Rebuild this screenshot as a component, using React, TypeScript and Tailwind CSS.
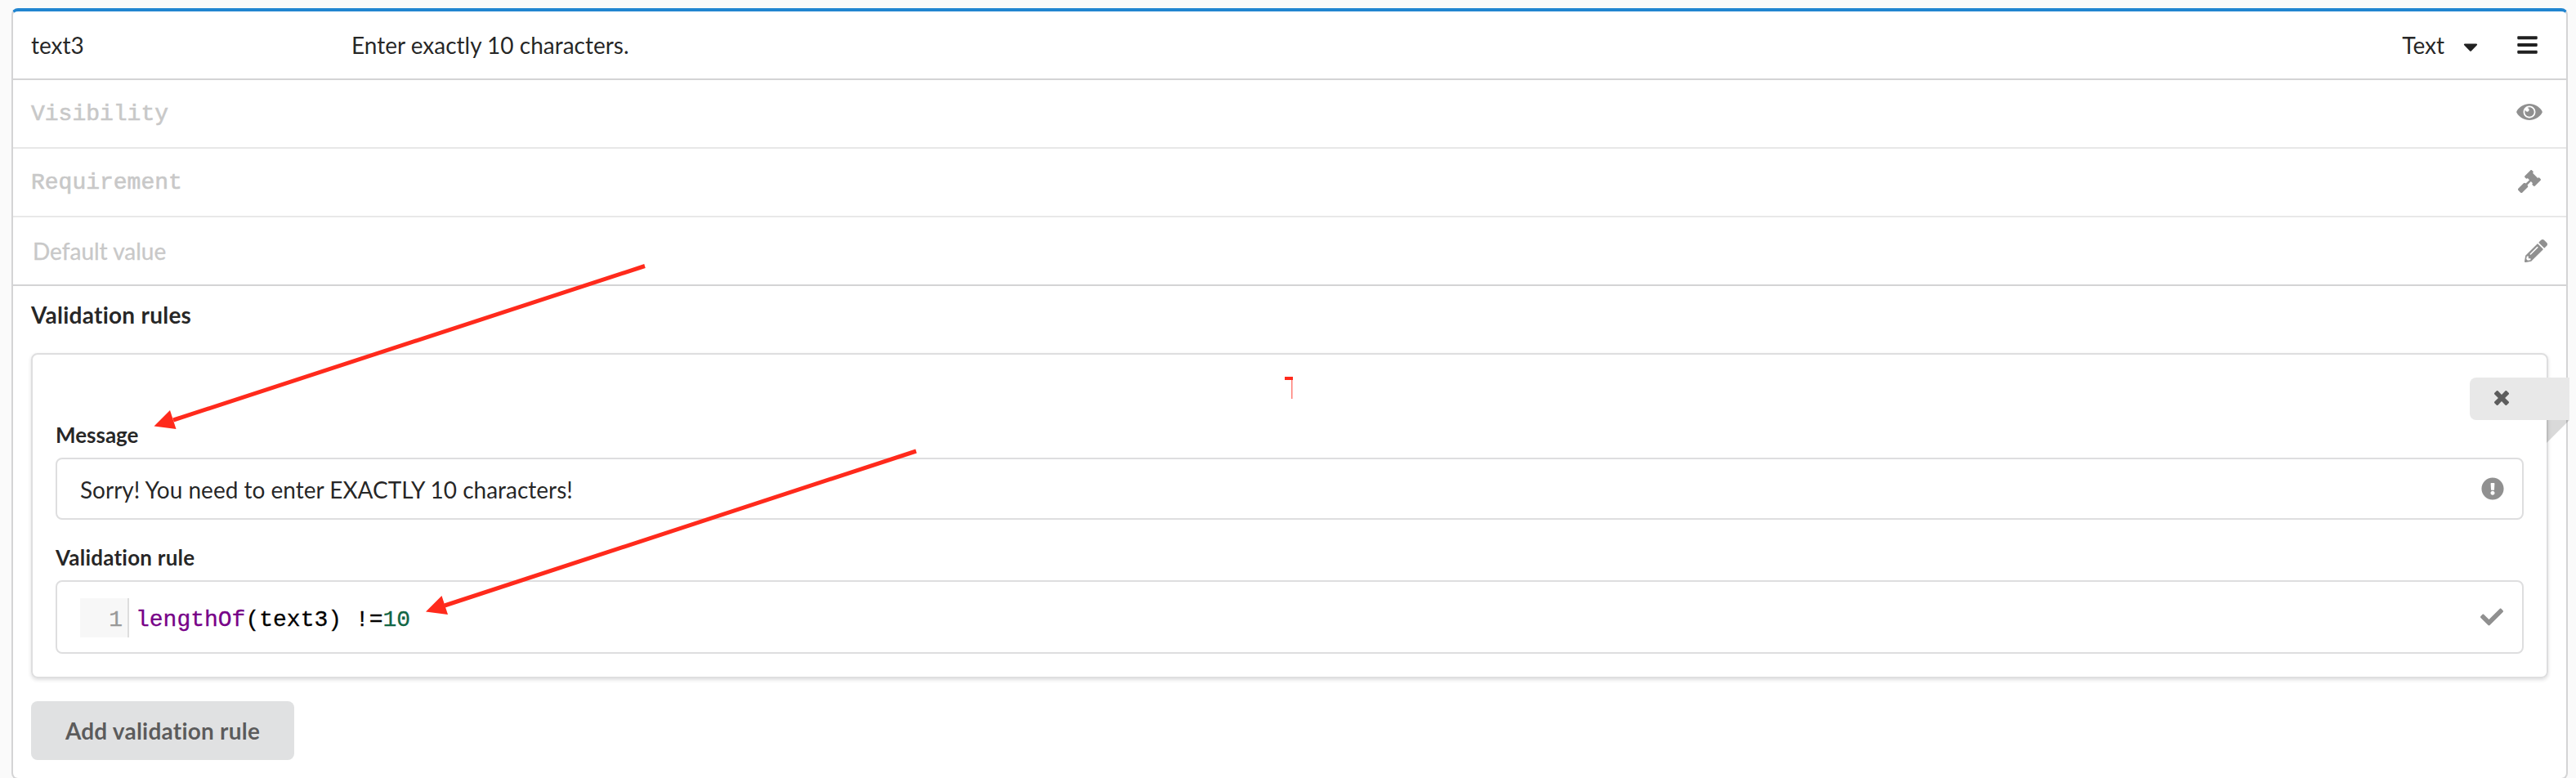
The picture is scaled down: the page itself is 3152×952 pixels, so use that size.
import { FaBars, FaCaretDown, FaCheck, FaExclamationCircle, FaGavel, FaPencilAlt } from 'react-icons/fa';

function Eye() {
  return (
    <svg viewBox="0 0 576 512" fill="currentColor" className="mb-[4px] h-[28px] w-[32px] text-[#909090]">
      <path d="M569.354 231.631C512.969 135.949 407.81 72 288 72 168.14 72 63.004 135.994 6.646 231.631a47.999 47.999 0 0 0 0 48.739C63.031 376.051 168.19 440 288 440c119.86 0 224.996-63.994 281.354-159.631a47.997 47.997 0 0 0 0-48.738zM288 392c-75.162 0-136-60.827-136-136 0-75.162 60.826-136 136-136 75.162 0 136 60.826 136 136 0 75.162-60.826 136-136 136zm104-136c0 57.438-46.562 104-104 104s-104-46.562-104-104c0-17.708 4.431-34.379 12.236-48.973l-.001.032c0 23.651 19.173 42.823 42.824 42.823s42.824-19.173 42.824-42.823c0-23.651-19.173-42.824-42.824-42.824l-.032.001C253.621 156.431 270.292 152 288 152c57.438 0 104 46.562 104 104z" />
    </svg>
  );
}

function Times() {
  return (
    <svg viewBox="0 0 384 512" fill="currentColor" className="mb-[2px] h-[24px] w-[18px]">
      <path d="M323.1 441l53.9-53.9c9.4-9.4 9.4-24.5 0-33.9L279.8 256l97.2-97.2c9.4-9.4 9.4-24.5 0-33.9L323.1 71c-9.4-9.4-24.5-9.4-33.9 0L192 168.2 94.8 71c-9.4-9.4-24.5-9.4-33.9 0L7 124.9c-9.4 9.4-9.4 24.5 0 33.9l97.2 97.2L7 353.2c-9.4 9.4-9.4 24.5 0 33.9L60.9 441c9.4 9.4 24.5 9.4 33.9 0l97.2-97.2 97.2 97.2c9.3 9.3 24.5 9.3 33.9 0z" />
    </svg>
  );
}

function Annotations() {
  return (
    <svg viewBox="0 0 3152 952" className="pointer-events-none absolute left-0 top-0 h-[952px] w-[3152px]" fill="#ff2a1c">
      <path d="M789 325.5L212 514" stroke="#ff2a1c" strokeWidth="5" />
      <path d="M188.5 521.5L208 502L215.5 525Z" />
      <path d="M1121 552L544 741" stroke="#ff2a1c" strokeWidth="5" />
      <path d="M521 748.5L540.5 729L548 752Z" />
      <path d="M1572 461h10v4h-10z" />
      <path d="M1580 465h1.5v23h-1.5z" opacity="0.6" />
    </svg>
  );
}

export default function App() {
  return (
    <div className="relative h-[952px] w-[3152px] overflow-hidden bg-[#fafafa] pl-[14px] pt-[10px] font-['Lato',sans-serif] text-[28px] leading-[40px] text-black/87 [font-variant-ligatures:none]">
      <div className="h-[944px] w-[3128px] rounded-[8px] border-x-2 border-b-2 border-t-4 border-[#d4d4d5] border-t-[#2185d0] bg-white">
        <div className="flex h-[84px] items-center border-b-2 border-[#d4d4d5] pl-[22px] pr-[35px]">
          <div className="w-[392px]">text3</div>
          <div className="flex-1">Enter exactly 10 characters.</div>
          <div>Text</div>
          <FaCaretDown className="ml-[23px] mt-[4px] h-[28px] w-[18px]" />
          <FaBars className="ml-[48px] h-[28px] w-[25px]" />
        </div>
        <div className="flex h-[84px] items-center justify-between border-b-2 border-[#e8e8e8] pl-[22px] pr-[29px] text-[#c8c8c8]">
          <span className="pt-[2px] font-['Liberation_Mono',monospace] [-webkit-text-stroke:0.6px]">Visibility</span>
          <Eye />
        </div>
        <div className="flex h-[84px] items-center justify-between border-b-2 border-[#e8e8e8] pl-[22px] pr-[31px] text-[#c8c8c8]">
          <span className="pt-[2px] font-['Liberation_Mono',monospace] [-webkit-text-stroke:0.6px]">Requirement</span>
          <FaGavel className="mb-[2px] h-[28px] w-[28px] text-[#909090]" />
        </div>
        <div className="flex h-[84px] items-center justify-between border-b-2 border-[#d4d4d5] pl-[24px] pr-[23px] text-[#c8c8c8]">
          <span className="[-webkit-text-stroke:0.3px]">Default value</span>
          <FaPencilAlt className="h-[28px] w-[28px] text-[#909090]" />
        </div>
        <div className="px-[22px] pt-[15px]">
          <div className="h-[67px] font-bold tracking-[0.25px]">Validation rules</div>
          <div className="relative h-[398px] w-[3080px] rounded-[8px] border-2 border-[#dededf] px-[28px] pt-[80px] shadow-[0_2px_4px_0_rgba(34,36,38,0.15)]">
            <div className="absolute left-[2982px] top-[28px] flex h-[52px] w-[122px] items-center rounded-l-[8px] bg-[#e8e8e8] pl-[30px] text-black/60">
              <Times />
            </div>
            <svg viewBox="0 0 28 28" className="absolute left-[3076px] top-[80px] h-[28px] w-[28px]">
              <path d="M0 0H28L0 28Z" fill="#000" fillOpacity="0.15" />
            </svg>
            <div className="h-[46px] text-[26px] font-bold leading-[36px]">Message</div>
            <div className="flex h-[76px] items-center justify-between rounded-[8px] border-2 border-[#dededf] pl-[28px] pr-[22px]">
              <span className="pt-[2px]">Sorry! You need to enter EXACTLY 10 characters!</span>
              <FaExclamationCircle className="mb-px h-[28px] w-[28px] text-[#909090]" />
            </div>
            <div className="mt-[28px] h-[46px] text-[26px] font-bold leading-[36px] tracking-[0.22px]">Validation rule</div>
            <div className="flex h-[90px] items-center justify-between rounded-[8px] border-2 border-[#dededf] pl-[28px] pr-[23px]">
              <div className="mt-[2px] flex h-[48px] items-center font-['Liberation_Mono',monospace] text-black [-webkit-text-stroke:0.3px]">
                <div className="h-[48px] w-[60px] border-r-2 border-[#dddddd] bg-[#f7f7f7] pr-[6px] text-right leading-[54px] text-[#999999]">1</div>
                <div className="h-[48px] whitespace-pre pl-[8px] leading-[54px]"><span className="text-[#770088]">lengthOf</span>(text3) !=<span className="text-[#116644]">10</span></div>
              </div>
              <FaCheck className="h-[28px] w-[28px] text-[#909090]" />
            </div>
          </div>
          <button className="mt-[28px] flex h-[72px] w-[322px] items-center justify-center rounded-[8px] bg-[#e0e1e2] font-bold tracking-[0.22px] text-black/60">Add validation rule</button>
        </div>
      </div>
      <Annotations />
    </div>
  );
}
